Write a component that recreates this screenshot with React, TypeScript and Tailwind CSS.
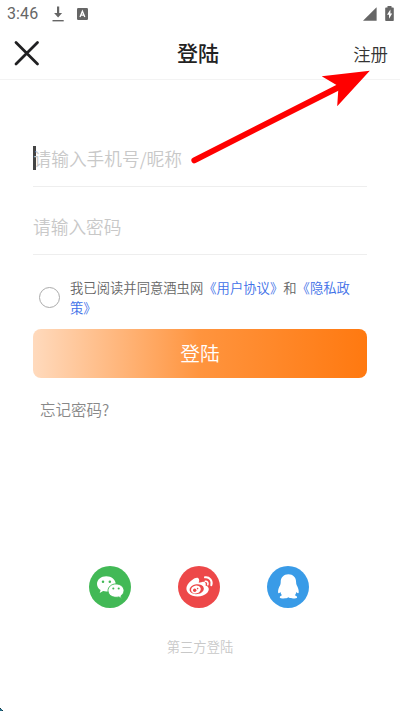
import { useState } from "react";

function StatusBar() {
  return (
    <div className="flex h-[27px] items-center justify-between pl-[7px] pr-[6px] text-[#666666]">
      <div className="flex items-center">
        <span className="w-[32px] font-[Roboto,sans-serif] text-[16px] leading-[27px] tracking-[0.1px] whitespace-nowrap">
          3:46
        </span>
        <svg className="ml-[13px] h-[16px] w-[12px]" viewBox="0 0 12 16" fill="currentColor">
          <path d="M5 0.5h2.2v6.6h2.9L6.1 11.4 2.1 7.1H5z" />
          <path d="M0.5 14h11.2v1.4H0.5z" />
        </svg>
        <svg className="ml-[13px] h-[12px] w-[11px]" viewBox="0 0 11 12">
          <rect width="11" height="12" rx="1.2" fill="currentColor" />
          <path d="M3 8.9 5.4 3.2 7.8 8.9M3.9 7.1h3" stroke="#fff" strokeWidth="1.3" fill="none" />
        </svg>
      </div>
      <div className="flex items-center">
        <svg className="h-[14px] w-[14px]" viewBox="0 0 14 14" fill="currentColor">
          <path d="M0 13.8 13.6 0.2v13.6z" />
        </svg>
        <svg className="ml-[8px] h-[15px] w-[9px]" viewBox="0 0 9 15">
          <path
            d="M2.5 0h4v1.5H8a.8.8 0 0 1 .8.8v11.9a.8.8 0 0 1-.8.8H1a.8.8 0 0 1-.8-.8V2.3A.8.8 0 0 1 1 1.5h1.5z"
            fill="currentColor"
          />
          <path d="M5.4 3.5 2 8.8h2v3.9L7.2 7.4H5.4z" fill="#fff" />
        </svg>
      </div>
    </div>
  );
}

function Header() {
  return (
    <header className="grid h-[53px] grid-cols-3 items-center border-b border-[#f3f3f3] pr-[12px] pl-[14px]">
      <button className="h-[26px] w-[26px]">
        <svg className="h-[26px] w-[26px]" viewBox="0 0 26 26">
          <path
            d="M2 2.5 23.5 24M23.5 2.5 2 24"
            stroke="#202022"
            strokeWidth="2.8"
            strokeLinecap="round"
          />
        </svg>
      </button>
      <h1 className="mr-[6px] mb-[2px] text-center text-[21px] leading-[30px] font-medium text-[#222222]">
        登陆
      </h1>
      <button className="mt-px justify-self-end text-[17.4px] leading-[26px] font-[350] text-[#333333]">注册</button>
    </header>
  );
}

function WechatIcon() {
  return (
    <svg className="h-[42px] w-[42px]" viewBox="0 0 42 42">
      <circle cx="21" cy="21" r="21" fill="#42b956" />
      <path
        d="M17.3 10.2c-5.2 0-9.3 3.4-9.3 7.7 0 2.5 1.4 4.7 3.6 6.1l-.9 2.9 3.4-1.8c1 .3 2.100.5 3.200.5 5.200 0 9.400-3.500 9.400-7.700s-4.200-7.700-9.400-7.700z"
        fill="#fff"
      />
      <circle cx="14" cy="15.8" r="1.25" fill="#42b956" />
      <circle cx="20.8" cy="15.8" r="1.25" fill="#42b956" />
      <path
        d="M27 17.9c-4.5 0-8 3-8 6.700s3.500 6.700 8 6.700c1 0 1.900-.2 2.800-.4l2.900 1.500-.8-2.500c1.900-1.300 3.100-3.200 3.100-5.300 0-3.700-3.500-6.700-8-6.700z"
        fill="#fff"
        stroke="#42b956"
        strokeWidth="0.9"
      />
      <circle cx="24.3" cy="22.5" r="1.05" fill="#42b956" />
      <circle cx="29.7" cy="22.5" r="1.05" fill="#42b956" />
    </svg>
  );
}

function WeiboIcon() {
  return (
    <svg className="h-[42px] w-[42px]" viewBox="0 0 42 42">
      <circle cx="21" cy="21" r="21" fill="#ed4849" />
      <path
        d="M20.3 12.2c-2.3-1.8-7.9 2.3-10.6 6.4-2 3-1.5 6.500.8 8.700 4.500 4.400 14.500 4.200 18.800-.5 2.600-2.900 1.700-6.300-1.800-7.200.9-2.600-.4-4.100-3.200-3.700l-3.600.8c.7-2 .8-3.500-.4-4.500z"
        fill="#fff"
      />
      <ellipse cx="18.7" cy="23.2" rx="7.2" ry="4.9" fill="#ed4849" transform="rotate(-8 18.7 23.2)" />
      <ellipse cx="17.9" cy="23.5" rx="4.9" ry="3.9" fill="#fff" transform="rotate(-12 17.9 23.5)" />
      <circle cx="16.7" cy="24.2" r="1.7" fill="#ed4849" />
      <circle cx="19.6" cy="22.6" r="0.8" fill="#ed4849" />
      <g fill="none" stroke="#fff" strokeWidth="2" strokeLinecap="round">
        <path d="M27 11.3c4.5-.6 7.8 3.3 6.3 7.9" />
        <path d="M27.3 15.3c2-.2 3.2 1.5 2.5 3.4" strokeWidth="1.6" />
      </g>
    </svg>
  );
}

function QQIcon() {
  return (
    <svg className="h-[42px] w-[42px]" viewBox="0 0 42 42">
      <circle cx="21" cy="21" r="21" fill="#399be7" />
      <path
        d="M21.4 8.3c-4.6 0-7.7 3.2-7.7 7.7 0 1.2-.1 1.900-.5 2.900-1.500 2.600-2.400 5.500-2.100 7.700.2 1.200 1.200.8 2.300-.6.3 1.200.7 2.300 1.500 3.200-1.400.5-2.200 1.200-2.100 2.200.2 1.400 7 1.500 8.600-.1 1.600 1.600 8.500 1.500 8.700.1.100-1-.8-1.700-2.200-2.200.8-.9 1.200-2 1.500-3.200 1.100 1.400 2.100 1.800 2.300.6.3-2.200-.6-5.100-2.100-7.700-.4-1-.5-1.700-.5-2.900 0-4.500-3.100-7.700-7.700-7.700z"
        fill="#fff"
      />
    </svg>
  );
}

// Red pointer that leads from the phone field to the register link
function RegisterArrow() {
  return (
    <svg
      className="pointer-events-none absolute top-[60px] left-[180px] h-[110px] w-[200px]"
      viewBox="180 60 200 110"
    >
      <path d="M194.3 160.3 340 86.5" stroke="#ff0000" strokeWidth="5.9" strokeLinecap="round" />
      <path d="M369.8 70.8 321.7 76.3 336.5 85 338.3 89.5 337.2 106.3z" fill="#ff0000" />
    </svg>
  );
}

export default function App() {
  const [agreed, setAgreed] = useState(false);

  return (
    <div className="relative flex h-[711px] w-[400px] flex-col overflow-hidden bg-white font-['Noto_Sans_CJK_SC',sans-serif]">
      <StatusBar />
      <Header />

      <main className="flex flex-col px-[33px] pt-[50px]">
        <div className="flex h-[57px] items-center border-b border-[#eeeeee]">
          <span className="-mr-[2px] mb-[1px] h-[24px] w-[2.5px] bg-[#444444]" />
          <span className="text-[17.7px] leading-[26px] font-[350] text-[#c8c8c8]">请输入手机号/昵称</span>
        </div>
        <div className="flex h-[68px] items-center border-b border-[#eeeeee] pt-[11px]">
          <span className="text-[17.7px] leading-[26px] font-[350] text-[#c8c8c8]">请输入密码</span>
        </div>

        <div className="mt-[23px] flex items-center pl-[6px]">
          <button
            className="mb-[2px] h-[21px] w-[21px] shrink-0 rounded-full border border-[#aaaaaa]"
            onClick={() => setAgreed(!agreed)}
          >
            {agreed && <span className="mx-auto block h-[11px] w-[11px] rounded-full bg-[#ff7a12]" />}
          </button>
          <p className="ml-[10px] w-[284px] text-[13.33px] leading-[20px] font-[350] text-[#666666]">
            我已阅读并同意酒虫网<span className="text-[#4070e8]">《用户协议》</span>和
            <span className="text-[#4070e8]">《隐私政<br />策》</span>
          </p>
        </div>

        <button className="mt-[11px] h-[49px] rounded-[8px] bg-linear-to-r/srgb from-[#ffdabd] via-[#ff943e] to-[#ff7910] pb-[2px] text-[19.8px] font-[350] text-white">
          登陆
        </button>
        <a className="mt-[19px] pl-[7px] text-[15.5px] leading-[24px] font-[350] text-[#888888]">忘记密码?</a>
      </main>

      <footer className="mt-auto flex flex-col items-center pb-[54px]">
        <div className="flex gap-[47px] pr-[2px]">
          <WechatIcon />
          <WeiboIcon />
          <QQIcon />
        </div>
        <p className="mt-[29px] text-[13.3px] leading-[20px] font-[350] text-[#c8c8c8]">第三方登陆</p>
      </footer>

      <RegisterArrow />
      <svg className="absolute bottom-0 left-0 h-[3px] w-[3px]" viewBox="0 0 3 3">
        <path d="M0 0h1v1h1v1h1v1H0z" fill="#26708a" />
        <path d="M0 0h1v1H0zM2 2h1v1H2z" fill="#173545" />
      </svg>
    </div>
  );
}
